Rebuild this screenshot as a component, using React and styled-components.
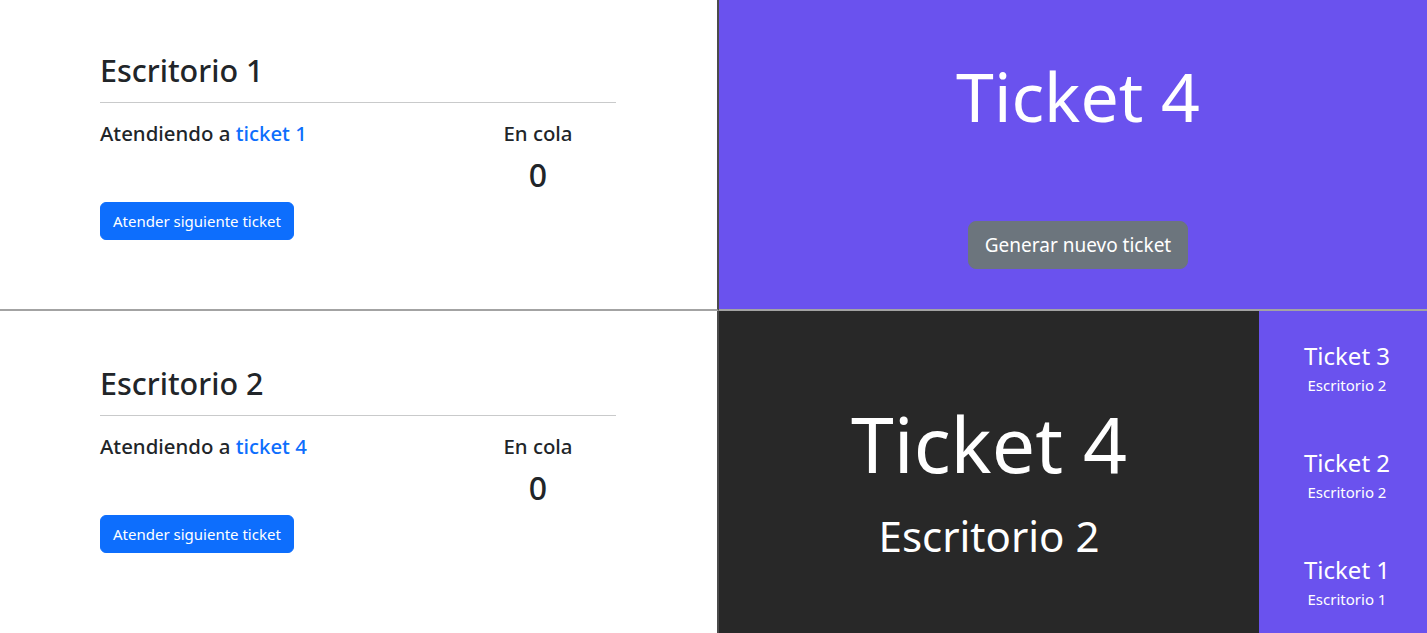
import React from 'react'
import styled, { createGlobalStyle } from 'styled-components'

const GlobalStyle = createGlobalStyle`
  html, body {
    margin: 0;
    padding: 0;
    height: 100%;
  }

  body {
    font-family: "Segoe UI", "Noto Sans", "Open Sans", sans-serif;
    color: #212529;
    background: #fff;
    overflow: hidden;
  }

  #root {
    height: 100%;
  }
`

const Screens = styled.main`
  display: grid;
  grid-template-columns: 719px 1fr;
  grid-template-rows: 311px 1fr;
  width: 100vw;
  height: 100vh;
`

const Window = styled.section`
  box-sizing: border-box;
  overflow: hidden;
  border-right: ${({ $left }) => ($left ? '2px solid #4b4b4b' : 'none')};
  border-bottom: ${({ $top }) => ($top ? '2px solid #a3a3a3' : 'none')};
`

/* escritorio */

const Desk = styled(Window)`
  background: #fff;
  padding-top: ${({ $top }) => ($top ? '51px' : '53px')};
`

const DeskInner = styled.div`
  width: 516px;
  margin-left: 100px;
`

const DeskTitle = styled.h2`
  margin: 0;
  font-size: 30.5px;
  font-weight: 500;
  line-height: 38px;
`

const Rule = styled.hr`
  margin: 13px 0 0;
  border: 0;
  border-top: 1px solid #c9cacb;
`

const DeskRow = styled.div`
  display: grid;
  grid-template-columns: 1fr 156px;
  margin-top: 18px;
`

const Serving = styled.h5`
  margin: 0;
  font-size: 20.4px;
  font-weight: 500;
  line-height: 24px;
`

const TicketLink = styled.span`
  color: #0d6efd;
`

const Queue = styled.div`
  text-align: center;
`

const QueueLabel = styled.h5`
  margin: 0;
  font-size: 20.4px;
  font-weight: 500;
  line-height: 24px;
`

const QueueCount = styled.h2`
  margin: 11px 0 0;
  font-size: 32px;
  font-weight: 500;
  line-height: 38px;
`

const Button = styled.button`
  font-family: inherit;
  font-size: ${({ $large }) => ($large ? '19px' : '15px')};
  line-height: ${({ $large }) => ($large ? '30px' : '24px')};
  padding: ${({ $large }) => ($large ? '8px 16px' : '6px 12px')};
  border-radius: ${({ $large }) => ($large ? '8px' : '6px')};
  color: #fff;
  background: ${({ $variant }) => ($variant === 'secondary' ? '#6c757d' : '#0d6efd')};
  border: 1px solid ${({ $variant }) => ($variant === 'secondary' ? '#6c757d' : '#0d6efd')};
  cursor: pointer;
`

const NextButton = styled(Button)`
  margin-top: 8px;
`

/* crear ticket */

const Issuer = styled(Window)`
  background: #6a52ee;
  display: flex;
  flex-direction: column;
  align-items: center;
  padding: 53px 0 0 10px;
`

const IssuerTicket = styled.h1`
  margin: 0;
  color: #fff;
  font-size: 68px;
  font-weight: 400;
  line-height: 86px;
`

const IssueButton = styled(Button)`
  margin-top: 82px;
`

/* pantalla publica */

const Board = styled(Window)`
  display: grid;
  grid-template-columns: 1fr 168px;
`

const Current = styled.div`
  background: #282828;
  color: #fff;
  display: flex;
  flex-direction: column;
  align-items: center;
  padding-top: 84px;
`

const CurrentTicket = styled.h1`
  margin: 0;
  font-size: 77px;
  font-weight: 400;
  line-height: 98px;
`

const CurrentDesk = styled.h2`
  margin: 18px 0 0;
  font-size: 42px;
  font-weight: 400;
  line-height: 50px;
`

const History = styled.ul`
  list-style: none;
  margin: 0;
  padding: 30px 0 0 8px;
  background: #6a52ee;
  color: #fff;
  display: flex;
  flex-direction: column;
  align-items: center;
`

const HistoryItem = styled.li`
  height: 107px;
  text-align: center;
`

const HistoryTicket = styled.div`
  font-size: 24px;
  line-height: 30px;
`

const HistoryDesk = styled.div`
  margin-top: 4px;
  font-size: 15px;
  line-height: 20px;
`

function DeskScreen({ desk, ticket, pending, top }) {
  return (
    <Desk $left $top={top}>
      <DeskInner>
        <DeskTitle>Escritorio {desk}</DeskTitle>
        <Rule />
        <DeskRow>
          <Serving>
            Atendiendo a <TicketLink>ticket {ticket}</TicketLink>
          </Serving>
          <Queue>
            <QueueLabel>En cola</QueueLabel>
            <QueueCount>{pending}</QueueCount>
          </Queue>
        </DeskRow>
        <NextButton>Atender siguiente ticket</NextButton>
      </DeskInner>
    </Desk>
  )
}

const lastTickets = [
  { number: 3, desk: 2 },
  { number: 2, desk: 2 },
  { number: 1, desk: 1 },
]

export default function App() {
  return (
    <>
      <GlobalStyle />
      <Screens>
        <DeskScreen desk={1} ticket={1} pending={0} top />
        <Issuer $top>
          <IssuerTicket>Ticket 4</IssuerTicket>
          <IssueButton $large $variant="secondary">
            Generar nuevo ticket
          </IssueButton>
        </Issuer>
        <DeskScreen desk={2} ticket={4} pending={0} />
        <Board>
          <Current>
            <CurrentTicket>Ticket 4</CurrentTicket>
            <CurrentDesk>Escritorio 2</CurrentDesk>
          </Current>
          <History>
            {lastTickets.map((t) => (
              <HistoryItem key={t.number}>
                <HistoryTicket>Ticket {t.number}</HistoryTicket>
                <HistoryDesk>Escritorio {t.desk}</HistoryDesk>
              </HistoryItem>
            ))}
          </History>
        </Board>
      </Screens>
    </>
  )
}
